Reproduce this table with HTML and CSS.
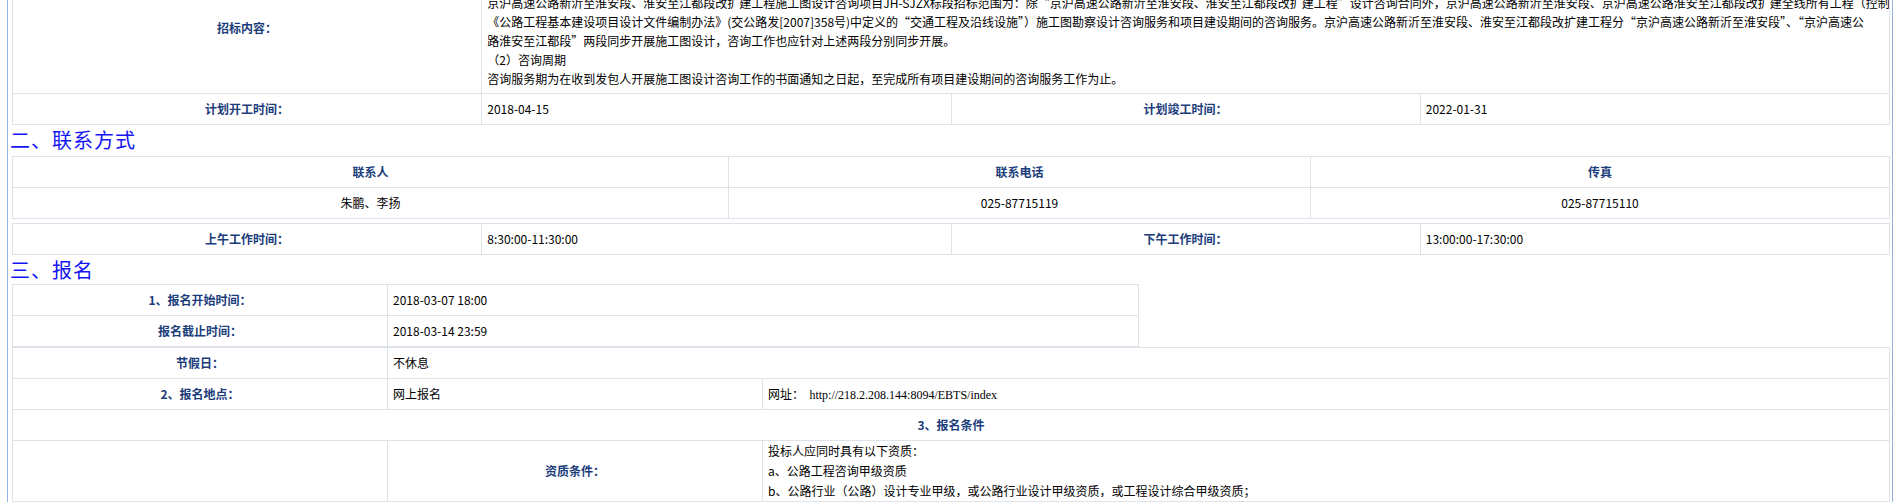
FILE: index.html
```html
<!DOCTYPE html>
<html lang="zh-CN">
<head>
<meta charset="utf-8">
<title>招标公告</title>
<link rel="stylesheet" href="styles.css">
</head>
<body>
<div class="page">
  <table class="tb tb-top">
    <colgroup><col class="q"><col class="q"><col class="q"><col class="q"></colgroup>
    <tr>
      <td class="lb">招标内容：</td>
      <td class="val txt tall" colspan="3">（1）咨询范围<br>京沪高速公路新沂至淮安段、淮安至江都段改扩建工程施工图设计咨询项目JH-SJZX标段招标范围为：除“京沪高速公路新沂至淮安段、淮安至江都段改扩建工程”设计咨询合同外，京沪高速公路新沂至淮安段、京沪高速公路淮安至江都段改扩建全线所有工程（控制性工程除外，包括但不限于<br>《公路工程基本建设项目设计文件编制办法》(交公路发[2007]358号)中定义的“交通工程及沿线设施”）施工图勘察设计咨询服务和项目建设期间的咨询服务。京沪高速公路新沂至淮安段、淮安至江都段改扩建工程分“京沪高速公路新沂至淮安段”、“京沪高速公<br>路淮安至江都段”两段同步开展施工图设计，咨询工作也应针对上述两段分别同步开展。<br>（2）咨询周期<br>咨询服务期为在收到发包人开展施工图设计咨询工作的书面通知之日起，至完成所有项目建设期间的咨询服务工作为止。</td>
    </tr>
    <tr>
      <td class="lb">计划开工时间：</td>
      <td class="val">2018-04-15</td>
      <td class="lb">计划竣工时间：</td>
      <td class="val">2022-01-31</td>
    </tr>
  </table>

  <h2 class="sec sec-contact">二、联系方式</h2>

  <table class="tb">
    <colgroup><col class="c-person"><col class="c-tel"><col class="c-fax"></colgroup>
    <tr>
      <td class="lb">联系人</td>
      <td class="lb">联系电话</td>
      <td class="lb">传真</td>
    </tr>
    <tr>
      <td class="val ctr">朱鹏、李扬</td>
      <td class="val ctr">025-87715119</td>
      <td class="val ctr">025-87715110</td>
    </tr>
  </table>

  <table class="tb tb-gap">
    <colgroup><col class="q"><col class="q"><col class="q"><col class="q"></colgroup>
    <tr>
      <td class="lb">上午工作时间：</td>
      <td class="val">8:30:00-11:30:00</td>
      <td class="lb">下午工作时间：</td>
      <td class="val">13:00:00-17:30:00</td>
    </tr>
  </table>

  <h2 class="sec sec-reg">三、报名</h2>

  <table class="tb tb-narrow">
    <colgroup><col class="third"><col></colgroup>
    <tr>
      <td class="lb">1、报名开始时间：</td>
      <td class="val">2018-03-07 18:00</td>
    </tr>
    <tr>
      <td class="lb">报名截止时间：</td>
      <td class="val">2018-03-14 23:59</td>
    </tr>
  </table>

  <table class="tb">
    <colgroup><col class="fifth"><col class="fifth"><col></colgroup>
    <tr>
      <td class="lb">节假日：</td>
      <td class="val" colspan="2">不休息</td>
    </tr>
    <tr>
      <td class="lb">2、报名地点：</td>
      <td class="val">网上报名</td>
      <td class="val">网址：&nbsp;&nbsp;<span class="url">http://218.2.208.144:8094/EBTS/index</span></td>
    </tr>
    <tr>
      <td class="lb" colspan="3">3、报名条件</td>
    </tr>
    <tr>
      <td class="val"></td>
      <td class="lb">资质条件：</td>
      <td class="val txt multi">投标人应同时具有以下资质：<br>a、公路工程咨询甲级资质<br>b、公路行业（公路）设计专业甲级，或公路行业设计甲级资质，或工程设计综合甲级资质；</td>
    </tr>
  </table>
</div>
</body>
</html>
```

FILE: styles.css
```css
* {
  box-sizing: border-box;
}

html,
body {
  margin: 0;
  padding: 0;
  background: #ffffff;
}

body {
  font-family: "Noto Sans CJK SC", "Noto Sans", sans-serif;
  font-size: 12px;
  color: #000000;
  overflow: hidden;
}

.page {
  margin-left: 7px;
  width: 1886px;
  min-height: 503px;
  border-left: 1px solid #93b2e6;
  border-right: 1px solid #93b2e6;
  padding: 0 2px 0 4px;
}

.tb {
  width: 1878px;
  border-collapse: collapse;
  table-layout: fixed;
}

.tb td {
  border: 1px solid #dde3e8;
  height: 31px;
  padding: 0 5px;
  line-height: 20px;
  vertical-align: middle;
}

.q {
  width: 25%;
}

.c-person {
  width: 716px;
}

.c-tel {
  width: 582px;
}

.tb-top {
  margin-top: -39px;
}

.tb-gap {
  margin-top: 4px;
}

.tb-narrow {
  width: 1127px;
}

.third {
  width: 375px;
}

.fifth {
  width: 375px;
}

.lb {
  text-align: center;
  font-weight: bold;
  color: #1b3d7b;
}

.val {
  color: #000000;
}

.ctr {
  text-align: center;
}

.txt {
  white-space: nowrap;
  overflow: hidden;
}

.tb td.tall {
  height: auto;
  line-height: 19px;
  padding-top: 12px;
  padding-bottom: 5px;
}

.multi {
  height: 74px;
  padding-top: 6px;
  padding-bottom: 6px;
}

.url {
  font-family: "Liberation Serif", serif;
  font-size: 12px;
}

.sec {
  margin: 0 0 0 -2px;
  font-size: 20px;
  font-weight: normal;
  letter-spacing: 1px;
  color: #1414f5;
  line-height: 30px;
}

.sec-contact {
  height: 31px;
}

.sec-reg {
  height: 29px;
}
```
